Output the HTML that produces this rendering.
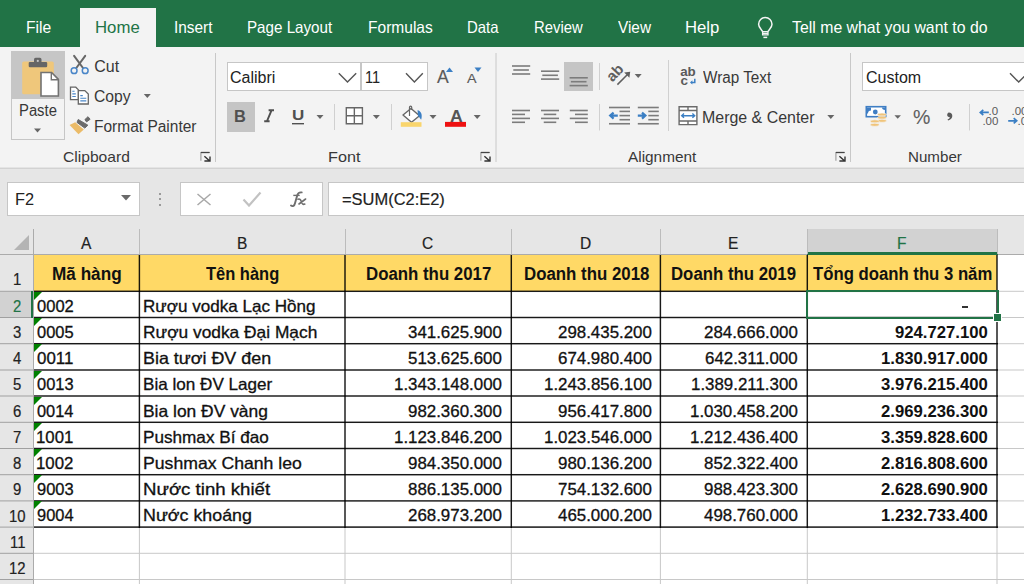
<!DOCTYPE html>
<html><head><meta charset="utf-8">
<style>
html,body{margin:0;padding:0;}
body{width:1024px;height:584px;overflow:hidden;position:relative;background:#ffffff;font-family:"Liberation Sans", sans-serif;}
.a{position:absolute;}
.t{position:absolute;white-space:nowrap;line-height:1;transform-origin:0 0;}
</style></head><body>
<div class="a" style="left:0px;top:0px;width:1024px;height:47px;background:#217346"></div>
<div class="a" style="left:80px;top:8px;width:76px;height:40px;background:#f3f3f3"></div>
<div class="t" style="left:25.55px;top:19.00px;font-size:16.5px;color:#ffffff;font-weight:normal;transform:scaleX(0.9468);">File</div>
<div class="t" style="left:95.06px;top:19.00px;font-size:16.5px;color:#217346;font-weight:normal;transform:scaleX(1.0165);">Home</div>
<div class="t" style="left:173.62px;top:19.00px;font-size:16.5px;color:#ffffff;font-weight:normal;transform:scaleX(0.9324);">Insert</div>
<div class="t" style="left:247.39px;top:19.00px;font-size:16.5px;color:#ffffff;font-weight:normal;transform:scaleX(0.9195);">Page Layout</div>
<div class="t" style="left:367.76px;top:19.00px;font-size:16.5px;color:#ffffff;font-weight:normal;transform:scaleX(0.9416);">Formulas</div>
<div class="t" style="left:467.21px;top:19.00px;font-size:16.5px;color:#ffffff;font-weight:normal;transform:scaleX(0.9046);">Data</div>
<div class="t" style="left:533.81px;top:19.00px;font-size:16.5px;color:#ffffff;font-weight:normal;transform:scaleX(0.8996);">Review</div>
<div class="t" style="left:618.02px;top:19.00px;font-size:16.5px;color:#ffffff;font-weight:normal;transform:scaleX(0.9296);">View</div>
<div class="t" style="left:685.06px;top:19.00px;font-size:16.5px;color:#ffffff;font-weight:normal;transform:scaleX(1.0117);">Help</div>
<div class="t" style="left:792.08px;top:19.00px;font-size:16.5px;color:#ffffff;font-weight:normal;transform:scaleX(0.9604);">Tell me what you want to do</div>
<svg class="a" style="left:755px;top:14px" width="22" height="26" viewBox="0 0 22 26"><path d="M7.5 17.4C6.6 15.3 3.6 13.4 3.6 10.2A6.7 6.7 0 0 1 17 10.2C17 13.4 14 15.3 13.1 17.4" fill="none" stroke="#f4f4f4" stroke-width="1.5"/><path d="M7.6 17.7h5.4v3.2h-5.4zM8 19.3h4.6" fill="none" stroke="#f4f4f4" stroke-width="1.3"/><path d="M8.4 23.4h3.8" stroke="#f4f4f4" stroke-width="1.5"/></svg>
<div class="a" style="left:0px;top:47px;width:1024px;height:121px;background:#f3f3f3"></div>
<div class="a" style="left:0px;top:167px;width:1024px;height:1px;background:#e4e4e4"></div>
<div class="a" style="left:0px;top:168px;width:1024px;height:1px;background:#d2d2d2"></div>
<div class="a" style="left:11px;top:51px;width:54px;height:89px;box-sizing:border-box;border:1px solid #c6c6c6;background:#f3f3f3"></div>
<div class="a" style="left:12px;top:52px;width:52px;height:47px;background:#c6c6c6"></div>
<div class="a" style="left:227px;top:62px;width:134px;height:29px;box-sizing:border-box;border:1px solid #c6c6c6;background:#fff"></div>
<div class="a" style="left:360px;top:62px;width:68px;height:29px;box-sizing:border-box;border:1px solid #c6c6c6;border-left:2px solid #c6c6c6;background:#fff"></div>
<div class="a" style="left:227px;top:102px;width:28px;height:30px;background:#c5c5c5"></div>
<div class="a" style="left:564px;top:62px;width:29px;height:29px;background:#c5c5c5"></div>
<div class="a" style="left:862px;top:62px;width:170px;height:29px;box-sizing:border-box;border:1px solid #c6c6c6;background:#fff"></div>
<div class="t" style="left:62.92px;top:149.00px;font-size:15px;color:#383838;font-weight:normal;transform:scaleX(1.0420);">Clipboard</div>
<div class="t" style="left:327.70px;top:149.00px;font-size:15px;color:#383838;font-weight:normal;transform:scaleX(1.0792);">Font</div>
<div class="t" style="left:627.80px;top:149.00px;font-size:15px;color:#383838;font-weight:normal;transform:scaleX(1.0240);">Alignment</div>
<div class="t" style="left:908.39px;top:149.00px;font-size:15px;color:#383838;font-weight:normal;transform:scaleX(1.0096);">Number</div>
<div class="t" style="left:19.21px;top:103.00px;font-size:16px;color:#383838;font-weight:normal;transform:scaleX(0.9259);">Paste</div>
<div class="t" style="left:94.20px;top:59.00px;font-size:16px;color:#383838;font-weight:normal;transform:scaleX(1.0000);">Cut</div>
<div class="t" style="left:94.22px;top:89.00px;font-size:16px;color:#383838;font-weight:normal;transform:scaleX(0.9792);">Copy</div>
<div class="t" style="left:93.76px;top:119.00px;font-size:16px;color:#383838;font-weight:normal;transform:scaleX(0.9689);">Format Painter</div>
<div class="t" style="left:230.20px;top:70.00px;font-size:16px;color:#222;font-weight:normal;transform:scaleX(1.0014);">Calibri</div>
<div class="t" style="left:364.91px;top:70.00px;font-size:16px;color:#222;font-weight:normal;transform:scaleX(0.9085);">11</div>
<div class="t" style="left:702.92px;top:70.00px;font-size:16px;color:#383838;font-weight:normal;transform:scaleX(0.9551);">Wrap Text</div>
<div class="t" style="left:702.23px;top:110.00px;font-size:16px;color:#383838;font-weight:normal;transform:scaleX(0.9959);">Merge &amp; Center</div>
<div class="t" style="left:865.70px;top:70.00px;font-size:16px;color:#222;font-weight:normal;transform:scaleX(1.0004);">Custom</div>
<div class="t" style="left:436.70px;top:69.00px;font-size:17.5px;color:#5a5a5a;font-weight:normal;transform:scaleX(1.0054);-webkit-text-stroke:0.15px #5a5a5a;">A</div>
<div class="t" style="left:466.50px;top:72.00px;font-size:13.5px;color:#5a5a5a;font-weight:normal;transform:scaleX(1.0582);-webkit-text-stroke:0.15px #5a5a5a;">A</div>
<div class="t" style="left:234.13px;top:109.00px;font-size:16px;color:#505050;font-weight:bold;transform:scaleX(1.0246);">B</div>
<div class="t" style="left:291.68px;top:107.00px;font-size:15px;color:#505050;font-weight:bold;transform:scaleX(1.1333);">U</div>
<div class="t" style="left:449.56px;top:108.00px;font-size:17px;color:#555;font-weight:bold;transform:scaleX(1.0360);">A</div>
<div class="t" style="left:912.72px;top:107.00px;font-size:20px;color:#606060;font-weight:normal;transform:scaleX(0.9756);-webkit-text-stroke:0.1px #606060;">%</div>
<svg class="a" style="left:0;top:0" width="1024" height="584" viewBox="0 0 1024 584"><path d="M215.5 53V162" stroke="#c8c8c8" stroke-width="1"/><path d="M496 53V162" stroke="#c8c8c8" stroke-width="1"/><path d="M850.5 53V162" stroke="#c8c8c8" stroke-width="1"/><path d="M334.5 104V130" stroke="#d0d0d0" stroke-width="1"/><path d="M391.5 104V130" stroke="#d0d0d0" stroke-width="1"/><path d="M599.5 63V90" stroke="#d0d0d0" stroke-width="1"/><path d="M599.5 104V130.5" stroke="#d0d0d0" stroke-width="1"/><path d="M668.5 60V131" stroke="#d0d0d0" stroke-width="1"/><path d="M969.5 104V130.5" stroke="#d0d0d0" stroke-width="1"/><path d="M200.9 160.7V152.5H209.6" fill="none" stroke="#9a9a9a" stroke-width="1.1"/><path d="M209.6 152.5H200.9" fill="none" stroke="#444" stroke-width="1.3"/><path d="M204.4 156.2L209.4 160.7M204.4 161H210.0V156.4" fill="none" stroke="#333" stroke-width="1.4"/><path d="M480.9 160.7V152.5H489.6" fill="none" stroke="#9a9a9a" stroke-width="1.1"/><path d="M489.6 152.5H480.9" fill="none" stroke="#444" stroke-width="1.3"/><path d="M484.4 156.2L489.4 160.7M484.4 161H490.0V156.4" fill="none" stroke="#333" stroke-width="1.4"/><path d="M835.9 160.7V152.5H844.6" fill="none" stroke="#9a9a9a" stroke-width="1.1"/><path d="M844.6 152.5H835.9" fill="none" stroke="#444" stroke-width="1.3"/><path d="M839.4 156.2L844.4 160.7M839.4 161H845.0V156.4" fill="none" stroke="#333" stroke-width="1.4"/><rect x="22.2" y="61.4" width="31.6" height="32.9" rx="1.6" fill="#efc77b"/><rect x="28.7" y="61.9" width="18.5" height="5.3" rx="1.2" fill="#666"/><rect x="34" y="57.8" width="7.5" height="6" rx="1.6" fill="#666"/><circle cx="37.8" cy="60.9" r="1.1" fill="#c6c6c6"/><path d="M41 72.5h10.6l6.8 6.9v16.6H41z" fill="#fff" stroke="#727272" stroke-width="1.6"/><path d="M51.3 72.5v7.2h7.1" fill="none" stroke="#727272" stroke-width="1.4"/><path d="M34.0 128.6h7l-3.5 4z" fill="#666"/><path d="M74.1 55.8L83 68M85.2 55.8L76.3 68" stroke="#666" stroke-width="2" fill="none" stroke-linecap="round"/><circle cx="74.1" cy="70.7" r="2.9" fill="#f3f3f3" stroke="#4a86c8" stroke-width="1.5"/><circle cx="85.2" cy="70.7" r="2.9" fill="#f3f3f3" stroke="#4a86c8" stroke-width="1.5"/><path d="M70.5 87.2h5.3l2.7 2.7v9.8h-8z" fill="#fff" stroke="#666" stroke-width="1.3"/><path d="M72.3 91.3h2.3M72.3 93.9h3.5M72.3 96.5h3.5" stroke="#4a86c8" stroke-width="1.1"/><path d="M78.3 90.6h6.5l3.5 3.5v9.9h-10z" fill="#fff" stroke="#666" stroke-width="1.3"/><path d="M80.3 95.6h2.5M80.3 98.3h6M80.3 100.9h6" stroke="#4a86c8" stroke-width="1.1"/><path d="M143.8 94.0h7l-3.5 4z" fill="#666"/><path d="M69.6 124.9L75.2 122.2L83.8 129.4L78.5 134.3Z" fill="#ebbb68"/><path d="M78.2 119.5L87.9 125.2L84.8 128.1L77 122.4Z" fill="#6a6a6a" stroke="#6a6a6a" stroke-width="1" stroke-linejoin="round"/><path d="M88 116.7L90.1 119.3L86.5 121.9L84.9 119.6Z" fill="#6a6a6a" stroke="#6a6a6a" stroke-width="1" stroke-linejoin="round"/><path d="M338.8 73.3L347.5 82.1L356.2 73.3" fill="none" stroke="#555" stroke-width="1.4"/><path d="M406 73.3L414.4 82.1L422.8 73.3" fill="none" stroke="#555" stroke-width="1.4"/><path d="M1010 73.3L1018.7 82.1L1027.4 73.3" fill="none" stroke="#555" stroke-width="1.4"/><path d="M446 72L449.5 67.5L453 72Z" fill="#3b7fc4"/><path d="M474.5 67.5H481.5L478 72Z" fill="#3b7fc4"/><path d="M268.6 110.3h5.4M264.2 121.2h5.4M271.5 110.3L267 121.2" fill="none" stroke="#505050" stroke-width="1.9"/><rect x="292" y="123" width="12" height="1.4" fill="#505050"/><path d="M316.5 115.0h7l-3.5 4z" fill="#666"/><path d="M346.3 107.7h16.1v16.1h-16.1zM354.35 107.7v16.1M346.3 115.75h16.1" fill="#fff" stroke="#666" stroke-width="1.4"/><path d="M372.9 114.9h7l-3.5 4z" fill="#666"/><path d="M411 108.5L419.5 115.8L411.5 122.3L403 115z" fill="#fff" stroke="#666" stroke-width="1.4" stroke-linejoin="round"/><path d="M409.5 116V107.2c0-1.5 2.2-1.5 2.2 0V110" fill="none" stroke="#666" stroke-width="1.2"/><path d="M417.5 110.2c3.5 .6 5.2 4.2 3.6 9.6l-3-4z" fill="#3b7fc4"/><rect x="400.8" y="122.2" width="20.7" height="4.6" fill="#f9d56d"/><path d="M429.5 114.9h7l-3.5 4z" fill="#666"/><rect x="445" y="121.9" width="21" height="4.9" fill="#ee1111"/><path d="M473.7 114.9h7l-3.5 4z" fill="#666"/><rect x="512" y="65.2" width="18.200000000000045" height="1.6" fill="#7c7c7c"/><rect x="513.3" y="69.2" width="15.600000000000023" height="1.6" fill="#7c7c7c"/><rect x="512" y="73.2" width="18.200000000000045" height="1.6" fill="#7c7c7c"/><rect x="541" y="70.4" width="18.200000000000045" height="1.6" fill="#7c7c7c"/><rect x="542.3" y="74.5" width="15.600000000000023" height="1.6" fill="#7c7c7c"/><rect x="541" y="78.3" width="18.200000000000045" height="1.6" fill="#7c7c7c"/><rect x="569.6" y="77.0" width="18.200000000000045" height="1.6" fill="#7c7c7c"/><rect x="570.9" y="80.9" width="15.600000000000023" height="1.6" fill="#7c7c7c"/><rect x="569.6" y="84.8" width="18.200000000000045" height="1.6" fill="#7c7c7c"/><rect x="512" y="109.7" width="18" height="1.6" fill="#7c7c7c"/><rect x="541" y="109.7" width="18" height="1.6" fill="#7c7c7c"/><rect x="569.8" y="109.7" width="18.0" height="1.6" fill="#7c7c7c"/><rect x="512" y="113.60000000000001" width="13" height="1.6" fill="#7c7c7c"/><rect x="543.75" y="113.60000000000001" width="12.5" height="1.6" fill="#7c7c7c"/><rect x="575" y="113.60000000000001" width="12.799999999999955" height="1.6" fill="#7c7c7c"/><rect x="512" y="117.60000000000001" width="18" height="1.6" fill="#7c7c7c"/><rect x="541" y="117.60000000000001" width="18" height="1.6" fill="#7c7c7c"/><rect x="569.8" y="117.60000000000001" width="18.0" height="1.6" fill="#7c7c7c"/><rect x="512" y="121.5" width="13" height="1.6" fill="#7c7c7c"/><rect x="543.75" y="121.5" width="12.5" height="1.6" fill="#7c7c7c"/><rect x="575" y="121.5" width="12.799999999999955" height="1.6" fill="#7c7c7c"/><rect x="609" y="106.7" width="21" height="1.6" fill="#7c7c7c"/><rect x="609" y="122.95" width="21" height="1.6" fill="#7c7c7c"/><rect x="619.5" y="110.60000000000001" width="10.5" height="1.6" fill="#7c7c7c"/><rect x="619.5" y="114.8" width="10.5" height="1.6" fill="#7c7c7c"/><rect x="619.5" y="118.9" width="10.5" height="1.6" fill="#7c7c7c"/><path d="M617.8 115.6H611M613.6 112.6L610.2 115.6L613.6 118.6" fill="none" stroke="#3b7fc4" stroke-width="2.2"/><rect x="637.8" y="106.7" width="21.0" height="1.6" fill="#7c7c7c"/><rect x="637.8" y="122.95" width="21.0" height="1.6" fill="#7c7c7c"/><rect x="648.3" y="110.60000000000001" width="10.5" height="1.6" fill="#7c7c7c"/><rect x="648.3" y="114.8" width="10.5" height="1.6" fill="#7c7c7c"/><rect x="648.3" y="118.9" width="10.5" height="1.6" fill="#7c7c7c"/><path d="M637.8 115.6H644.5999999999999M642.0 112.6L645.4 115.6L642.0 118.6" fill="none" stroke="#3b7fc4" stroke-width="2.2"/><text x="0" y="0" font-family="Liberation Sans" font-weight="bold" font-size="15" fill="#5f5f5f" transform="translate(612.6 82.6) rotate(-47)">ab</text><path d="M617.4 84.6L627.5 74.5" fill="none" stroke="#5f5f5f" stroke-width="1.5"/><path d="M630.2 71.8L624.2 72.6L629.4 77.8Z" fill="#5f5f5f"/><path d="M634.7 74.0h7l-3.5 4z" fill="#666"/><text x="680.2" y="75.8" font-family="Liberation Sans" font-weight="bold" font-size="13.5" fill="#5a5a5a" textLength="15.6" lengthAdjust="spacingAndGlyphs">ab</text><text x="680.4" y="85" font-family="Liberation Sans" font-weight="bold" font-size="13.5" fill="#5a5a5a">c</text><path d="M694.8 78.8v3.6h-3.4" fill="none" stroke="#3b7fc4" stroke-width="1.5"/><path d="M690 82.4l2.4-2.2v4.4z" fill="#3b7fc4"/><path d="M679.1 106.7h17.8v17.9h-17.8zM679.1 110.5h17.8M679.1 121h17.8M688 106.7v3.8M688 121v3.6" fill="#fff" stroke="#6a6a6a" stroke-width="1.4"/><path d="M681.5 115.7h13M684 113.6l-2.3 2.1 2.3 2.1M692.4 113.6l2.3 2.1-2.3 2.1" fill="none" stroke="#3b7fc4" stroke-width="1.4"/><path d="M827.3 114.9h7l-3.5 4z" fill="#666"/><rect x="866.3" y="106.7" width="19.4" height="10" fill="#fff" stroke="#3f7ec4" stroke-width="1.6"/><path d="M867 107.5h4v3c-2 0-3 1-3 3h-1z M885 107.5h-3c0 1.5 1 2.5 3 2.5z" fill="#3f7ec4"/><circle cx="875.3" cy="112" r="2.4" fill="#3f7ec4"/><ellipse cx="882" cy="114.6" rx="4.4" ry="1.5" fill="#f0c47a" stroke="#f3f3f3" stroke-width=".6"/><ellipse cx="882" cy="117.6" rx="4.4" ry="1.5" fill="#f0c47a" stroke="#f3f3f3" stroke-width=".6"/><ellipse cx="882" cy="120.8" rx="4.4" ry="1.5" fill="#f0c47a" stroke="#f3f3f3" stroke-width=".6"/><ellipse cx="874.8" cy="121.3" rx="4.4" ry="1.5" fill="#f0c47a" stroke="#f3f3f3" stroke-width=".6"/><ellipse cx="874.8" cy="124.8" rx="4.4" ry="1.5" fill="#f0c47a" stroke="#f3f3f3" stroke-width=".6"/><path d="M894.45 115.15h6.5l-3.25 3.7z" fill="#666"/><path d="M948.8 112.6c2.3 0 3.5 1.5 3.5 3.4c0 2.2-1.6 3.6-4.2 4.4l-.6-1c1.5-.6 2.3-1.4 2.4-2.2c-1.6 0-2.7-.9-2.7-2.2c0-1.4 .9-2.4 1.6-2.4z" fill="#5a5a5a"/><path d="M988.8 112.4H980.5M983.3 109.8L980.3 112.4L983.3 115" fill="none" stroke="#3b7fc4" stroke-width="1.7"/><text x="988.6" y="115.4" font-family="Liberation Sans" font-size="11.5" fill="#5a5a5a" style="-webkit-text-stroke:0.35px #5a5a5a">.0</text><text x="982.4" y="125" font-family="Liberation Sans" font-size="11.5" fill="#5a5a5a" style="-webkit-text-stroke:0.35px #5a5a5a">.00</text><text x="1011.5" y="115.4" font-family="Liberation Sans" font-size="11.5" fill="#5a5a5a" style="-webkit-text-stroke:0.35px #5a5a5a">.00</text><path d="M1008.2 120.8H1016.5M1013.7 118.2L1016.7 120.8L1013.7 123.4" fill="none" stroke="#3b7fc4" stroke-width="1.7"/><text x="1017.5" y="125" font-family="Liberation Sans" font-size="11.5" fill="#5a5a5a" style="-webkit-text-stroke:0.35px #5a5a5a">.0</text></svg>
<div class="a" style="left:0px;top:169px;width:1024px;height:60px;background:#e6e6e6"></div>
<div class="a" style="left:7px;top:182px;width:133px;height:34px;box-sizing:border-box;border:1px solid #c6c6c6;background:#fff"></div>
<div class="t" style="left:15.39px;top:192.00px;font-size:16px;color:#222;font-weight:normal;transform:scaleX(1.0205);">F2</div>
<svg class="a" style="left:121.3px;top:195.05px" width="10" height="5.5" viewBox="0 0 10 5.5"><path d="M0 0H10L5.0 5.5Z" fill="#6a6a6a"/></svg>
<div class="a" style="left:158.5px;top:193px;width:2.2px;height:2.2px;background:#9a9a9a"></div>
<div class="a" style="left:158.5px;top:198px;width:2.2px;height:2.2px;background:#9a9a9a"></div>
<div class="a" style="left:158.5px;top:203.5px;width:2.2px;height:2.2px;background:#9a9a9a"></div>
<div class="a" style="left:180px;top:182px;width:143px;height:34px;box-sizing:border-box;border:1px solid #c6c6c6;background:#fff"></div>
<svg class="a" style="left:196px;top:193px" width="16" height="13" viewBox="0 0 16 13"><path d="M1.5 1L14.5 12M14.5 1L1.5 12" stroke="#a8a8a8" stroke-width="1.5"/></svg>
<svg class="a" style="left:242px;top:191px" width="20" height="16" viewBox="0 0 20 16"><path d="M1.5 8.5l5.5 6L18.5 1.5" fill="none" stroke="#c2c2c2" stroke-width="2.2"/></svg>
<svg class="a" style="left:285px;top:186px" width="28" height="26" viewBox="0 0 28 26"><path d="M6 19.6c1.6 1.2 3.4.4 4-2.4L12.2 9.5c.6-2.4 1.9-3.4 4.5-3.1" fill="none" stroke="#6e6e6e" stroke-width="1.9" stroke-linecap="round"/><path d="M8.3 9.4H14.7" stroke="#6e6e6e" stroke-width="1.4"/><path d="M13 13.2c1.2-.5 2.2-.2 2.8 1.2l1.4 3c.5 1 1.4 1.2 2.6.6M20.6 13l-6.6 5" fill="none" stroke="#6e6e6e" stroke-width="1.6" stroke-linecap="round"/></svg>
<div class="a" style="left:328px;top:182px;width:700px;height:34px;box-sizing:border-box;border:1px solid #c6c6c6;border-right:none;background:#fff"></div>
<div class="t" style="left:342.18px;top:191.00px;font-size:16.5px;color:#222;font-weight:normal;transform:scaleX(0.9969);-webkit-text-stroke:0.2px #222;">=SUM(C2:E2)</div>
<div class="a" style="left:0px;top:229px;width:1024px;height:25px;background:#e6e6e6"></div>
<div class="a" style="left:0px;top:254px;width:1024px;height:1px;background:#ababab"></div>
<svg class="a" style="left:13px;top:234px" width="17" height="17" viewBox="0 0 17 17"><path d="M16 1V16H1Z" fill="#b4b4b4"/></svg>
<div class="a" style="left:0px;top:255px;width:33px;height:329px;background:#e6e6e6"></div>
<div class="a" style="left:33px;top:229px;width:1px;height:355px;background:#ababab"></div>
<div class="a" style="left:808px;top:229px;width:189px;height:23px;background:#d2d2d2"></div>
<div class="a" style="left:807px;top:252px;width:191px;height:3px;background:#217346"></div>
<div class="a" style="left:139px;top:229px;width:1px;height:25px;background:#bcbcbc"></div>
<div class="a" style="left:345px;top:229px;width:1px;height:25px;background:#bcbcbc"></div>
<div class="a" style="left:511px;top:229px;width:1px;height:25px;background:#bcbcbc"></div>
<div class="a" style="left:660px;top:229px;width:1px;height:25px;background:#bcbcbc"></div>
<div class="a" style="left:807px;top:229px;width:1px;height:25px;background:#bcbcbc"></div>
<div class="a" style="left:997px;top:229px;width:1px;height:25px;background:#bcbcbc"></div>
<div class="t" style="left:81.29px;top:236.00px;font-size:16px;color:#222;font-weight:normal;transform:scaleX(0.9700);-webkit-text-stroke:0.2px #222;">A</div>
<div class="t" style="left:236.81px;top:236.00px;font-size:16px;color:#222;font-weight:normal;transform:scaleX(0.9700);-webkit-text-stroke:0.2px #222;">B</div>
<div class="t" style="left:422.45px;top:236.00px;font-size:16px;color:#222;font-weight:normal;transform:scaleX(0.9700);-webkit-text-stroke:0.2px #222;">C</div>
<div class="t" style="left:579.99px;top:236.00px;font-size:16px;color:#222;font-weight:normal;transform:scaleX(0.9700);-webkit-text-stroke:0.2px #222;">D</div>
<div class="t" style="left:728.38px;top:236.00px;font-size:16px;color:#222;font-weight:normal;transform:scaleX(0.9700);-webkit-text-stroke:0.2px #222;">E</div>
<div class="t" style="left:897.11px;top:236.00px;font-size:16px;color:#217346;font-weight:normal;transform:scaleX(0.9700);-webkit-text-stroke:0.2px #217346;">F</div>
<div class="a" style="left:34px;top:526px;width:990px;height:1px;background:rgba(200,200,200,0.400)"></div>
<div class="a" style="left:34px;top:527px;width:990px;height:1px;background:rgba(200,200,200,0.600)"></div>
<div class="a" style="left:34px;top:552px;width:990px;height:1px;background:rgba(200,200,200,0.200)"></div>
<div class="a" style="left:34px;top:553px;width:990px;height:1px;background:rgba(200,200,200,0.800)"></div>
<div class="a" style="left:34px;top:579px;width:990px;height:1px;background:rgba(200,200,200,1.000)"></div>
<div class="a" style="left:998px;top:290px;width:26px;height:1px;background:rgba(200,200,200,0.200)"></div>
<div class="a" style="left:998px;top:291px;width:26px;height:1px;background:rgba(200,200,200,0.800)"></div>
<div class="a" style="left:998px;top:317px;width:26px;height:1px;background:rgba(200,200,200,1.000)"></div>
<div class="a" style="left:998px;top:343px;width:26px;height:1px;background:rgba(200,200,200,0.800)"></div>
<div class="a" style="left:998px;top:344px;width:26px;height:1px;background:rgba(200,200,200,0.200)"></div>
<div class="a" style="left:998px;top:369px;width:26px;height:1px;background:rgba(200,200,200,0.500)"></div>
<div class="a" style="left:998px;top:370px;width:26px;height:1px;background:rgba(200,200,200,0.500)"></div>
<div class="a" style="left:998px;top:395px;width:26px;height:1px;background:rgba(200,200,200,0.500)"></div>
<div class="a" style="left:998px;top:396px;width:26px;height:1px;background:rgba(200,200,200,0.500)"></div>
<div class="a" style="left:998px;top:421px;width:26px;height:1px;background:rgba(200,200,200,0.200)"></div>
<div class="a" style="left:998px;top:422px;width:26px;height:1px;background:rgba(200,200,200,0.800)"></div>
<div class="a" style="left:998px;top:448px;width:26px;height:1px;background:rgba(200,200,200,1.000)"></div>
<div class="a" style="left:998px;top:474px;width:26px;height:1px;background:rgba(200,200,200,0.800)"></div>
<div class="a" style="left:998px;top:475px;width:26px;height:1px;background:rgba(200,200,200,0.200)"></div>
<div class="a" style="left:998px;top:500px;width:26px;height:1px;background:rgba(200,200,200,0.600)"></div>
<div class="a" style="left:998px;top:501px;width:26px;height:1px;background:rgba(200,200,200,0.400)"></div>
<div class="a" style="left:998px;top:526px;width:26px;height:1px;background:rgba(200,200,200,0.400)"></div>
<div class="a" style="left:998px;top:527px;width:26px;height:1px;background:rgba(200,200,200,0.600)"></div>
<div class="a" style="left:138px;top:528px;width:1px;height:56px;background:rgba(200,200,200,0.100)"></div>
<div class="a" style="left:139px;top:528px;width:1px;height:56px;background:rgba(200,200,200,0.900)"></div>
<div class="a" style="left:344px;top:528px;width:1px;height:56px;background:rgba(200,200,200,0.500)"></div>
<div class="a" style="left:345px;top:528px;width:1px;height:56px;background:rgba(200,200,200,0.500)"></div>
<div class="a" style="left:510px;top:528px;width:1px;height:56px;background:rgba(200,200,200,0.200)"></div>
<div class="a" style="left:511px;top:528px;width:1px;height:56px;background:rgba(200,200,200,0.800)"></div>
<div class="a" style="left:659px;top:528px;width:1px;height:56px;background:rgba(200,200,200,0.100)"></div>
<div class="a" style="left:660px;top:528px;width:1px;height:56px;background:rgba(200,200,200,0.900)"></div>
<div class="a" style="left:806px;top:528px;width:1px;height:56px;background:rgba(200,200,200,0.200)"></div>
<div class="a" style="left:807px;top:528px;width:1px;height:56px;background:rgba(200,200,200,0.800)"></div>
<div class="a" style="left:996px;top:528px;width:1px;height:56px;background:rgba(200,200,200,0.500)"></div>
<div class="a" style="left:997px;top:528px;width:1px;height:56px;background:rgba(200,200,200,0.500)"></div>
<div class="a" style="left:0px;top:290px;width:33px;height:1px;background:rgba(160,160,160,0.200)"></div>
<div class="a" style="left:0px;top:291px;width:33px;height:1px;background:rgba(160,160,160,0.800)"></div>
<div class="a" style="left:0px;top:317px;width:33px;height:1px;background:rgba(160,160,160,1.000)"></div>
<div class="a" style="left:0px;top:343px;width:33px;height:1px;background:rgba(160,160,160,0.800)"></div>
<div class="a" style="left:0px;top:344px;width:33px;height:1px;background:rgba(160,160,160,0.200)"></div>
<div class="a" style="left:0px;top:369px;width:33px;height:1px;background:rgba(160,160,160,0.500)"></div>
<div class="a" style="left:0px;top:370px;width:33px;height:1px;background:rgba(160,160,160,0.500)"></div>
<div class="a" style="left:0px;top:395px;width:33px;height:1px;background:rgba(160,160,160,0.500)"></div>
<div class="a" style="left:0px;top:396px;width:33px;height:1px;background:rgba(160,160,160,0.500)"></div>
<div class="a" style="left:0px;top:421px;width:33px;height:1px;background:rgba(160,160,160,0.200)"></div>
<div class="a" style="left:0px;top:422px;width:33px;height:1px;background:rgba(160,160,160,0.800)"></div>
<div class="a" style="left:0px;top:448px;width:33px;height:1px;background:rgba(160,160,160,1.000)"></div>
<div class="a" style="left:0px;top:474px;width:33px;height:1px;background:rgba(160,160,160,0.800)"></div>
<div class="a" style="left:0px;top:475px;width:33px;height:1px;background:rgba(160,160,160,0.200)"></div>
<div class="a" style="left:0px;top:500px;width:33px;height:1px;background:rgba(160,160,160,0.600)"></div>
<div class="a" style="left:0px;top:501px;width:33px;height:1px;background:rgba(160,160,160,0.400)"></div>
<div class="a" style="left:0px;top:526px;width:33px;height:1px;background:rgba(160,160,160,0.400)"></div>
<div class="a" style="left:0px;top:527px;width:33px;height:1px;background:rgba(160,160,160,0.600)"></div>
<div class="a" style="left:0px;top:552px;width:33px;height:1px;background:rgba(160,160,160,0.200)"></div>
<div class="a" style="left:0px;top:553px;width:33px;height:1px;background:rgba(160,160,160,0.800)"></div>
<div class="a" style="left:0px;top:579px;width:33px;height:1px;background:rgba(160,160,160,1.000)"></div>
<div class="a" style="left:0px;top:292px;width:31px;height:25px;background:#d2d2d2"></div>
<div class="a" style="left:31px;top:291px;width:2px;height:27px;background:#217346"></div>
<div class="t" style="left:13.15px;top:272.00px;font-size:16px;color:#222;font-weight:normal;transform:scaleX(0.9300);-webkit-text-stroke:0.2px #222;">1</div>
<div class="t" style="left:13.37px;top:299.00px;font-size:16px;color:#217346;font-weight:normal;transform:scaleX(0.9300);-webkit-text-stroke:0.2px #217346;">2</div>
<div class="t" style="left:13.37px;top:325.00px;font-size:16px;color:#222;font-weight:normal;transform:scaleX(0.9300);-webkit-text-stroke:0.2px #222;">3</div>
<div class="t" style="left:13.45px;top:351.00px;font-size:16px;color:#222;font-weight:normal;transform:scaleX(0.9300);-webkit-text-stroke:0.2px #222;">4</div>
<div class="t" style="left:13.37px;top:377.00px;font-size:16px;color:#222;font-weight:normal;transform:scaleX(0.9300);-webkit-text-stroke:0.2px #222;">5</div>
<div class="t" style="left:13.30px;top:404.00px;font-size:16px;color:#222;font-weight:normal;transform:scaleX(0.9300);-webkit-text-stroke:0.2px #222;">6</div>
<div class="t" style="left:13.37px;top:430.00px;font-size:16px;color:#222;font-weight:normal;transform:scaleX(0.9300);-webkit-text-stroke:0.2px #222;">7</div>
<div class="t" style="left:13.33px;top:456.00px;font-size:16px;color:#222;font-weight:normal;transform:scaleX(0.9300);-webkit-text-stroke:0.2px #222;">8</div>
<div class="t" style="left:13.37px;top:482.00px;font-size:16px;color:#222;font-weight:normal;transform:scaleX(0.9300);-webkit-text-stroke:0.2px #222;">9</div>
<div class="t" style="left:8.94px;top:509.00px;font-size:16px;color:#222;font-weight:normal;transform:scaleX(0.9300);-webkit-text-stroke:0.2px #222;">10</div>
<div class="t" style="left:9.58px;top:535.00px;font-size:16px;color:#222;font-weight:normal;transform:scaleX(0.9300);-webkit-text-stroke:0.2px #222;">11</div>
<div class="t" style="left:9.06px;top:561.00px;font-size:16px;color:#222;font-weight:normal;transform:scaleX(0.9300);-webkit-text-stroke:0.2px #222;">12</div>
<div class="a" style="left:34px;top:255px;width:963px;height:36px;background:#ffd966"></div>
<div class="a" style="left:34px;top:290px;width:964px;height:1px;background:rgba(0,0,0,0.383)"></div>
<div class="a" style="left:34px;top:291px;width:964px;height:1px;background:rgba(0,0,0,0.900)"></div>
<div class="a" style="left:34px;top:292px;width:964px;height:1px;background:rgba(0,0,0,0.023)"></div>
<div class="a" style="left:34px;top:316px;width:964px;height:1px;background:rgba(0,0,0,0.203)"></div>
<div class="a" style="left:34px;top:317px;width:964px;height:1px;background:rgba(0,0,0,0.900)"></div>
<div class="a" style="left:34px;top:318px;width:964px;height:1px;background:rgba(0,0,0,0.203)"></div>
<div class="a" style="left:34px;top:342px;width:964px;height:1px;background:rgba(0,0,0,0.023)"></div>
<div class="a" style="left:34px;top:343px;width:964px;height:1px;background:rgba(0,0,0,0.900)"></div>
<div class="a" style="left:34px;top:344px;width:964px;height:1px;background:rgba(0,0,0,0.383)"></div>
<div class="a" style="left:34px;top:369px;width:964px;height:1px;background:rgba(0,0,0,0.653)"></div>
<div class="a" style="left:34px;top:370px;width:964px;height:1px;background:rgba(0,0,0,0.653)"></div>
<div class="a" style="left:34px;top:395px;width:964px;height:1px;background:rgba(0,0,0,0.653)"></div>
<div class="a" style="left:34px;top:396px;width:964px;height:1px;background:rgba(0,0,0,0.653)"></div>
<div class="a" style="left:34px;top:421px;width:964px;height:1px;background:rgba(0,0,0,0.383)"></div>
<div class="a" style="left:34px;top:422px;width:964px;height:1px;background:rgba(0,0,0,0.900)"></div>
<div class="a" style="left:34px;top:423px;width:964px;height:1px;background:rgba(0,0,0,0.023)"></div>
<div class="a" style="left:34px;top:447px;width:964px;height:1px;background:rgba(0,0,0,0.203)"></div>
<div class="a" style="left:34px;top:448px;width:964px;height:1px;background:rgba(0,0,0,0.900)"></div>
<div class="a" style="left:34px;top:449px;width:964px;height:1px;background:rgba(0,0,0,0.203)"></div>
<div class="a" style="left:34px;top:473px;width:964px;height:1px;background:rgba(0,0,0,0.022)"></div>
<div class="a" style="left:34px;top:474px;width:964px;height:1px;background:rgba(0,0,0,0.900)"></div>
<div class="a" style="left:34px;top:475px;width:964px;height:1px;background:rgba(0,0,0,0.383)"></div>
<div class="a" style="left:34px;top:500px;width:964px;height:1px;background:rgba(0,0,0,0.743)"></div>
<div class="a" style="left:34px;top:501px;width:964px;height:1px;background:rgba(0,0,0,0.562)"></div>
<div class="a" style="left:34px;top:526px;width:964px;height:1px;background:rgba(0,0,0,0.562)"></div>
<div class="a" style="left:34px;top:527px;width:964px;height:1px;background:rgba(0,0,0,0.743)"></div>
<div class="a" style="left:138px;top:255px;width:1px;height:273px;background:rgba(0,0,0,0.292)"></div>
<div class="a" style="left:139px;top:255px;width:1px;height:273px;background:rgba(0,0,0,0.900)"></div>
<div class="a" style="left:140px;top:255px;width:1px;height:273px;background:rgba(0,0,0,0.113)"></div>
<div class="a" style="left:344px;top:255px;width:1px;height:273px;background:rgba(0,0,0,0.653)"></div>
<div class="a" style="left:345px;top:255px;width:1px;height:273px;background:rgba(0,0,0,0.653)"></div>
<div class="a" style="left:510px;top:255px;width:1px;height:273px;background:rgba(0,0,0,0.383)"></div>
<div class="a" style="left:511px;top:255px;width:1px;height:273px;background:rgba(0,0,0,0.900)"></div>
<div class="a" style="left:512px;top:255px;width:1px;height:273px;background:rgba(0,0,0,0.022)"></div>
<div class="a" style="left:659px;top:255px;width:1px;height:273px;background:rgba(0,0,0,0.293)"></div>
<div class="a" style="left:660px;top:255px;width:1px;height:273px;background:rgba(0,0,0,0.900)"></div>
<div class="a" style="left:661px;top:255px;width:1px;height:273px;background:rgba(0,0,0,0.113)"></div>
<div class="a" style="left:806px;top:255px;width:1px;height:273px;background:rgba(0,0,0,0.383)"></div>
<div class="a" style="left:807px;top:255px;width:1px;height:273px;background:rgba(0,0,0,0.900)"></div>
<div class="a" style="left:808px;top:255px;width:1px;height:273px;background:rgba(0,0,0,0.022)"></div>
<div class="a" style="left:996px;top:255px;width:1px;height:273px;background:rgba(0,0,0,0.653)"></div>
<div class="a" style="left:997px;top:255px;width:1px;height:273px;background:rgba(0,0,0,0.653)"></div>
<div class="t" style="left:52.48px;top:266.00px;font-size:17.5px;color:#111;font-weight:bold;transform:scaleX(0.9813);">Mã hàng</div>
<div class="t" style="left:206.34px;top:266.00px;font-size:17.5px;color:#111;font-weight:bold;transform:scaleX(0.9415);">Tên hàng</div>
<div class="t" style="left:366.41px;top:266.00px;font-size:17.5px;color:#111;font-weight:bold;transform:scaleX(0.9615);">Doanh thu 2017</div>
<div class="t" style="left:523.51px;top:266.00px;font-size:17.5px;color:#111;font-weight:bold;transform:scaleX(0.9625);">Doanh thu 2018</div>
<div class="t" style="left:671.41px;top:266.00px;font-size:17.5px;color:#111;font-weight:bold;transform:scaleX(0.9593);">Doanh thu 2019</div>
<div class="t" style="left:813.03px;top:266.00px;font-size:17.5px;color:#111;font-weight:bold;transform:scaleX(0.9556);">Tổng doanh thu 3 năm</div>
<svg class="a" style="left:34px;top:292px" width="9" height="9" viewBox="0 0 9 9"><path d="M0 0H8L0 8Z" fill="#008000"/></svg>
<div class="t" style="left:36.84px;top:298.00px;font-size:16.5px;color:#111;font-weight:normal;transform:scaleX(1.0021);-webkit-text-stroke:0.3px #111;">0002</div>
<div class="t" style="left:142.63px;top:298.00px;font-size:16.5px;color:#111;font-weight:normal;transform:scaleX(1.0344);-webkit-text-stroke:0.3px #111;">Rượu vodka Lạc Hồng</div>
<div class="a" style="left:962px;top:306px;width:6px;height:2px;background:#333"></div>
<svg class="a" style="left:34px;top:318px" width="9" height="9" viewBox="0 0 9 9"><path d="M0 0H8L0 8Z" fill="#008000"/></svg>
<div class="t" style="left:36.84px;top:324.00px;font-size:16.5px;color:#111;font-weight:normal;transform:scaleX(0.9974);-webkit-text-stroke:0.3px #111;">0005</div>
<div class="t" style="left:142.61px;top:324.00px;font-size:16.5px;color:#111;font-weight:normal;transform:scaleX(1.0512);-webkit-text-stroke:0.3px #111;">Rượu vodka Đại Mạch</div>
<div class="t" style="left:408.02px;top:324.00px;font-size:16.5px;color:#111;font-weight:normal;transform:scaleX(1.0232);-webkit-text-stroke:0.3px #111;">341.625.900</div>
<div class="t" style="left:557.72px;top:324.00px;font-size:16.5px;color:#111;font-weight:normal;transform:scaleX(1.0232);-webkit-text-stroke:0.3px #111;">298.435.200</div>
<div class="t" style="left:703.72px;top:324.00px;font-size:16.5px;color:#111;font-weight:normal;transform:scaleX(1.0232);-webkit-text-stroke:0.3px #111;">284.666.000</div>
<div class="t" style="left:894.82px;top:324.00px;font-size:16.5px;color:#111;font-weight:bold;transform:scaleX(1.0121);">924.727.100</div>
<svg class="a" style="left:34px;top:344px" width="9" height="9" viewBox="0 0 9 9"><path d="M0 0H8L0 8Z" fill="#008000"/></svg>
<div class="t" style="left:36.82px;top:350.00px;font-size:16.5px;color:#111;font-weight:normal;transform:scaleX(1.0232);-webkit-text-stroke:0.3px #111;">0011</div>
<div class="t" style="left:142.57px;top:350.00px;font-size:16.5px;color:#111;font-weight:normal;transform:scaleX(1.0843);-webkit-text-stroke:0.3px #111;">Bia tươi ĐV đen</div>
<div class="t" style="left:408.02px;top:350.00px;font-size:16.5px;color:#111;font-weight:normal;transform:scaleX(1.0232);-webkit-text-stroke:0.3px #111;">513.625.600</div>
<div class="t" style="left:557.72px;top:350.00px;font-size:16.5px;color:#111;font-weight:normal;transform:scaleX(1.0232);-webkit-text-stroke:0.3px #111;">674.980.400</div>
<div class="t" style="left:704.99px;top:350.00px;font-size:16.5px;color:#111;font-weight:normal;transform:scaleX(1.0232);-webkit-text-stroke:0.3px #111;">642.311.000</div>
<div class="t" style="left:880.87px;top:350.00px;font-size:16.5px;color:#111;font-weight:bold;transform:scaleX(1.0121);">1.830.917.000</div>
<svg class="a" style="left:34px;top:371px" width="9" height="9" viewBox="0 0 9 9"><path d="M0 0H8L0 8Z" fill="#008000"/></svg>
<div class="t" style="left:36.84px;top:376.00px;font-size:16.5px;color:#111;font-weight:normal;transform:scaleX(0.9974);-webkit-text-stroke:0.3px #111;">0013</div>
<div class="t" style="left:142.63px;top:376.00px;font-size:16.5px;color:#111;font-weight:normal;transform:scaleX(1.0366);-webkit-text-stroke:0.3px #111;">Bia lon ĐV Lager</div>
<div class="t" style="left:393.93px;top:376.00px;font-size:16.5px;color:#111;font-weight:normal;transform:scaleX(1.0232);-webkit-text-stroke:0.3px #111;">1.343.148.000</div>
<div class="t" style="left:543.63px;top:376.00px;font-size:16.5px;color:#111;font-weight:normal;transform:scaleX(1.0232);-webkit-text-stroke:0.3px #111;">1.243.856.100</div>
<div class="t" style="left:690.89px;top:376.00px;font-size:16.5px;color:#111;font-weight:normal;transform:scaleX(1.0232);-webkit-text-stroke:0.3px #111;">1.389.211.300</div>
<div class="t" style="left:880.87px;top:376.00px;font-size:16.5px;color:#111;font-weight:bold;transform:scaleX(1.0121);">3.976.215.400</div>
<svg class="a" style="left:34px;top:397px" width="9" height="9" viewBox="0 0 9 9"><path d="M0 0H8L0 8Z" fill="#008000"/></svg>
<div class="t" style="left:36.84px;top:403.00px;font-size:16.5px;color:#111;font-weight:normal;transform:scaleX(0.9928);-webkit-text-stroke:0.3px #111;">0014</div>
<div class="t" style="left:142.61px;top:403.00px;font-size:16.5px;color:#111;font-weight:normal;transform:scaleX(1.0560);-webkit-text-stroke:0.3px #111;">Bia lon ĐV vàng</div>
<div class="t" style="left:408.02px;top:403.00px;font-size:16.5px;color:#111;font-weight:normal;transform:scaleX(1.0232);-webkit-text-stroke:0.3px #111;">982.360.300</div>
<div class="t" style="left:557.72px;top:403.00px;font-size:16.5px;color:#111;font-weight:normal;transform:scaleX(1.0232);-webkit-text-stroke:0.3px #111;">956.417.800</div>
<div class="t" style="left:689.63px;top:403.00px;font-size:16.5px;color:#111;font-weight:normal;transform:scaleX(1.0232);-webkit-text-stroke:0.3px #111;">1.030.458.200</div>
<div class="t" style="left:880.87px;top:403.00px;font-size:16.5px;color:#111;font-weight:bold;transform:scaleX(1.0121);">2.969.236.300</div>
<svg class="a" style="left:34px;top:423px" width="9" height="9" viewBox="0 0 9 9"><path d="M0 0H8L0 8Z" fill="#008000"/></svg>
<div class="t" style="left:36.24px;top:429.00px;font-size:16.5px;color:#111;font-weight:normal;transform:scaleX(1.0163);-webkit-text-stroke:0.3px #111;">1001</div>
<div class="t" style="left:142.63px;top:429.00px;font-size:16.5px;color:#111;font-weight:normal;transform:scaleX(1.0391);-webkit-text-stroke:0.3px #111;">Pushmax Bí đao</div>
<div class="t" style="left:393.93px;top:429.00px;font-size:16.5px;color:#111;font-weight:normal;transform:scaleX(1.0232);-webkit-text-stroke:0.3px #111;">1.123.846.200</div>
<div class="t" style="left:543.63px;top:429.00px;font-size:16.5px;color:#111;font-weight:normal;transform:scaleX(1.0232);-webkit-text-stroke:0.3px #111;">1.023.546.000</div>
<div class="t" style="left:689.63px;top:429.00px;font-size:16.5px;color:#111;font-weight:normal;transform:scaleX(1.0232);-webkit-text-stroke:0.3px #111;">1.212.436.400</div>
<div class="t" style="left:880.87px;top:429.00px;font-size:16.5px;color:#111;font-weight:bold;transform:scaleX(1.0121);">3.359.828.600</div>
<svg class="a" style="left:34px;top:449px" width="9" height="9" viewBox="0 0 9 9"><path d="M0 0H8L0 8Z" fill="#008000"/></svg>
<div class="t" style="left:36.24px;top:455.00px;font-size:16.5px;color:#111;font-weight:normal;transform:scaleX(1.0188);-webkit-text-stroke:0.3px #111;">1002</div>
<div class="t" style="left:142.59px;top:455.00px;font-size:16.5px;color:#111;font-weight:normal;transform:scaleX(1.0689);-webkit-text-stroke:0.3px #111;">Pushmax Chanh leo</div>
<div class="t" style="left:408.02px;top:455.00px;font-size:16.5px;color:#111;font-weight:normal;transform:scaleX(1.0232);-webkit-text-stroke:0.3px #111;">984.350.000</div>
<div class="t" style="left:557.72px;top:455.00px;font-size:16.5px;color:#111;font-weight:normal;transform:scaleX(1.0232);-webkit-text-stroke:0.3px #111;">980.136.200</div>
<div class="t" style="left:703.72px;top:455.00px;font-size:16.5px;color:#111;font-weight:normal;transform:scaleX(1.0232);-webkit-text-stroke:0.3px #111;">852.322.400</div>
<div class="t" style="left:880.87px;top:455.00px;font-size:16.5px;color:#111;font-weight:bold;transform:scaleX(1.0121);">2.816.808.600</div>
<svg class="a" style="left:34px;top:475px" width="9" height="9" viewBox="0 0 9 9"><path d="M0 0H8L0 8Z" fill="#008000"/></svg>
<div class="t" style="left:36.76px;top:481.00px;font-size:16.5px;color:#111;font-weight:normal;transform:scaleX(0.9997);-webkit-text-stroke:0.3px #111;">9003</div>
<div class="t" style="left:142.51px;top:481.00px;font-size:16.5px;color:#111;font-weight:normal;transform:scaleX(1.1285);-webkit-text-stroke:0.3px #111;">Nước tinh khiết</div>
<div class="t" style="left:408.02px;top:481.00px;font-size:16.5px;color:#111;font-weight:normal;transform:scaleX(1.0232);-webkit-text-stroke:0.3px #111;">886.135.000</div>
<div class="t" style="left:557.72px;top:481.00px;font-size:16.5px;color:#111;font-weight:normal;transform:scaleX(1.0232);-webkit-text-stroke:0.3px #111;">754.132.600</div>
<div class="t" style="left:703.72px;top:481.00px;font-size:16.5px;color:#111;font-weight:normal;transform:scaleX(1.0232);-webkit-text-stroke:0.3px #111;">988.423.300</div>
<div class="t" style="left:880.87px;top:481.00px;font-size:16.5px;color:#111;font-weight:bold;transform:scaleX(1.0121);">2.628.690.900</div>
<svg class="a" style="left:34px;top:501px" width="9" height="9" viewBox="0 0 9 9"><path d="M0 0H8L0 8Z" fill="#008000"/></svg>
<div class="t" style="left:36.76px;top:507.00px;font-size:16.5px;color:#111;font-weight:normal;transform:scaleX(0.9951);-webkit-text-stroke:0.3px #111;">9004</div>
<div class="t" style="left:142.57px;top:507.00px;font-size:16.5px;color:#111;font-weight:normal;transform:scaleX(1.0809);-webkit-text-stroke:0.3px #111;">Nước khoáng</div>
<div class="t" style="left:408.02px;top:507.00px;font-size:16.5px;color:#111;font-weight:normal;transform:scaleX(1.0232);-webkit-text-stroke:0.3px #111;">268.973.200</div>
<div class="t" style="left:557.72px;top:507.00px;font-size:16.5px;color:#111;font-weight:normal;transform:scaleX(1.0232);-webkit-text-stroke:0.3px #111;">465.000.200</div>
<div class="t" style="left:703.72px;top:507.00px;font-size:16.5px;color:#111;font-weight:normal;transform:scaleX(1.0232);-webkit-text-stroke:0.3px #111;">498.760.000</div>
<div class="t" style="left:880.87px;top:507.00px;font-size:16.5px;color:#111;font-weight:bold;transform:scaleX(1.0121);">1.232.733.400</div>
<div class="a" style="left:806px;top:290px;width:193px;height:2px;background:#217346"></div>
<div class="a" style="left:806px;top:290px;width:2px;height:29px;background:#217346"></div>
<div class="a" style="left:806px;top:317px;width:187px;height:2px;background:#217346"></div>
<div class="a" style="left:997px;top:290px;width:2px;height:23px;background:#217346"></div>
<div class="a" style="left:994px;top:314px;width:7px;height:7px;background:#217346;outline:1px solid #fff"></div>
</body></html>
